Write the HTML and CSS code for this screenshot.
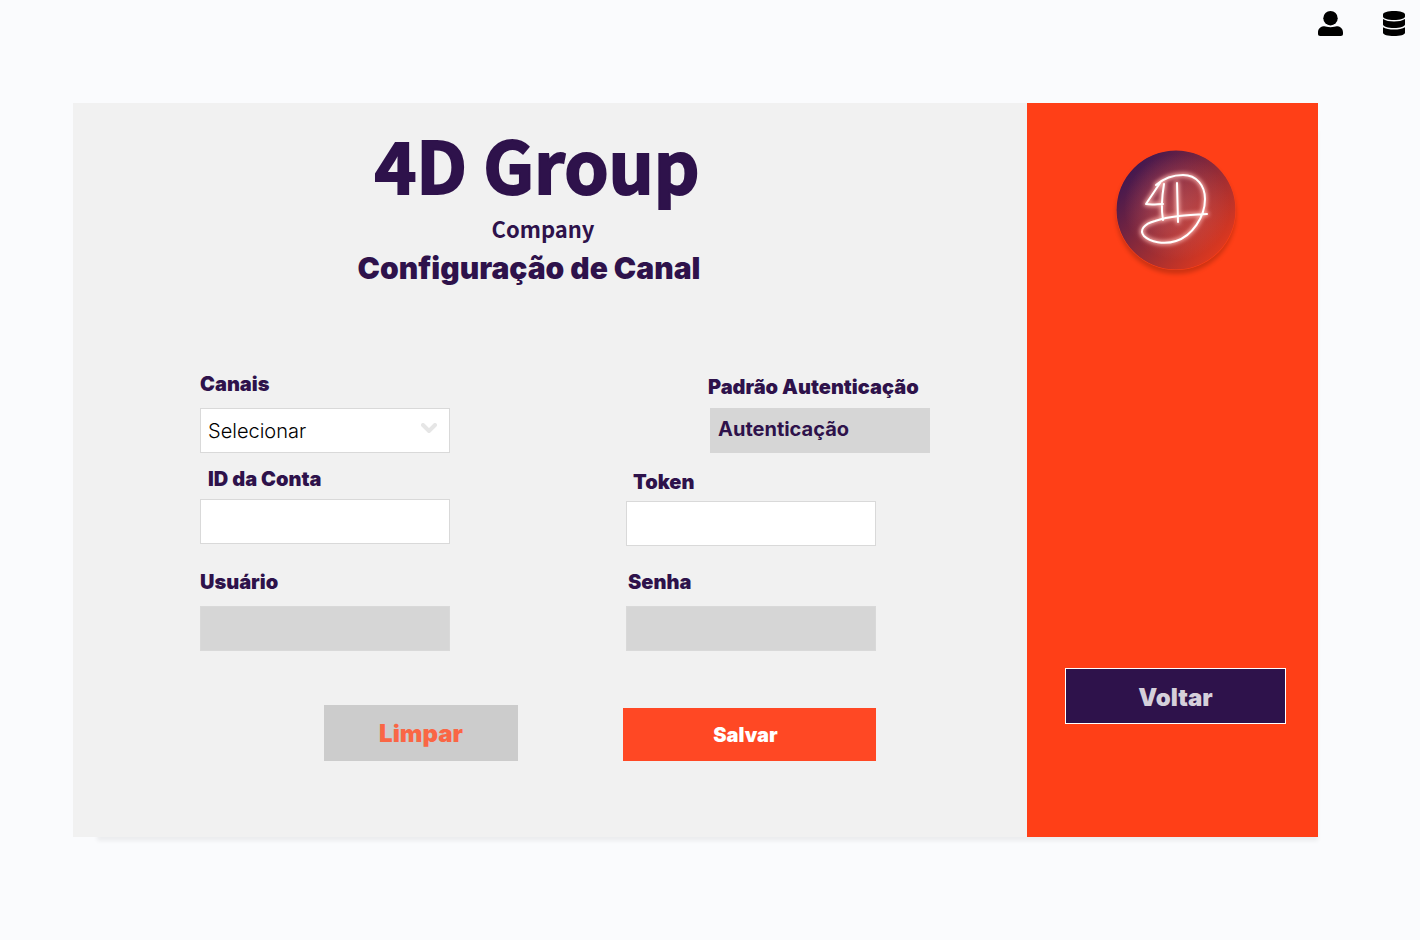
FILE: index.html
```html
<!DOCTYPE html>
<html lang="pt-BR">
<head>
<meta charset="utf-8">
<title>Configuração de Canal</title>
<link rel="stylesheet" href="styles.css">
</head>
<body>
<nav class="topbar">
  <button class="icon-button" type="button" aria-label="Perfil">
    <svg class="icon" viewBox="0 0 26 26"><circle cx="13.500" cy="7.200" r="7.200"/><path d="M6.500 15.300C8.500 14.900 9.800 16.200 13.500 16.200S18.500 14.900 20.500 15.300C24.300 15.800 26 18.500 26 21.500V22.800C26 24.200 25.200 25 23.800 25H3.200C1.800 25 1 24.200 1 22.800V21.500C1 18.500 2.700 15.800 6.500 15.300Z"/></svg>
  </button>
  <button class="icon-button" type="button" aria-label="Banco de dados">
    <svg class="icon" viewBox="0 0 26 26"><path d="M2 3.500C2 1.500 7 0 13 0S24 1.500 24 3.500V5.500C24 7.500 19 9 13 9S2 7.500 2 5.500ZM2 8C4.400 9.700 8.700 10.500 13 10.500S21.600 9.700 24 8V13.500C24 15.400 19 17 13 17S2 15.400 2 13.500ZM2 16.200C4.400 17.900 8.700 18.500 13 18.500S21.600 17.900 24 16.200V21.700C24 23.700 19 25 13 25S2 23.700 2 21.700Z"/></svg>
  </button>
</nav>
<main class="card">
  <section class="panel">
    <header class="heading">
      <h1 class="brand">4D Group</h1>
      <p class="tagline">Company</p>
      <h2 class="title">Configuração de Canal</h2>
    </header>
    <form class="form">
      <div class="fields">
        <div class="field">
          <label class="label" for="canais">Canais</label>
          <div class="select-wrap">
            <select class="control select" id="canais"><option>Selecionar</option></select>
            <svg class="chevron" viewBox="0 0 16 10"><path d="M2 2L8 8L14 2"/></svg>
          </div>
        </div>
        <div class="field field-end">
          <label class="label label-low" for="auth">Padrão Autenticação</label>
          <input class="control control-off control-auth" id="auth" value="Autenticação" readonly>
        </div>
        <div class="field">
          <label class="label label-inset" for="conta">ID da Conta</label>
          <input class="control" id="conta" type="text">
        </div>
        <div class="field">
          <label class="label label-low label-inset-low" for="token">Token</label>
          <input class="control" id="token" type="text">
        </div>
        <div class="field field-last">
          <label class="label" for="usuario">Usuário</label>
          <input class="control control-off" id="usuario" type="text" disabled>
        </div>
        <div class="field field-last">
          <label class="label label-nudge" for="senha">Senha</label>
          <input class="control control-off" id="senha" type="password" disabled>
        </div>
      </div>
      <div class="actions">
        <button class="button button-clear" type="reset">Limpar</button>
        <button class="button button-save" type="button">Salvar</button>
      </div>
    </form>
  </section>
  <aside class="side">
    <svg class="logo" viewBox="0 0 120 120" role="img" aria-label="4D">
      <defs>
        <linearGradient id="disc" x1=".12" y1=".18" x2=".85" y2=".85">
          <stop offset="0" stop-color="#44184f"/><stop offset=".5" stop-color="#8f2b38"/><stop offset="1" stop-color="#dc381f"/>
        </linearGradient>
        <radialGradient id="halo"><stop offset="0" stop-color="#f08078" stop-opacity=".35"/><stop offset=".5" stop-color="#f07068" stop-opacity=".25"/><stop offset="1" stop-color="#f07068" stop-opacity="0"/></radialGradient>
        <filter id="glow" x="-30%" y="-30%" width="160%" height="160%"><feGaussianBlur stdDeviation="2"/></filter>
        <g id="mark">
          <path d="M40 35C47 29 57 25 67 25C81 25 89 36 89 49C89 67 76 86 60 91C48 95 34 92 28 86C23 80 28 74 39 71C53 66 72 65 91 64"/>
          <path d="M44 33L30 54C36 55 42 54 47 54M48 34C46 46 45 59 47 70M61 33L62 72"/>
        </g>
      </defs>
      <circle cx="60" cy="60" r="59.500" fill="url(#disc)"/>
      <circle cx="61" cy="57" r="53" fill="url(#halo)"/>
      <use class="mark-glow" href="#mark" filter="url(#glow)"/>
      <use class="mark-line" href="#mark"/>
    </svg>
    <button class="button button-back" type="button">Voltar</button>
  </aside>
</main>
</body>
</html>
```
FILE: styles.css
```css
* {
  box-sizing: border-box;
}

body {
  margin: 0;
  background: #fafbfd;
  color: #2e124b;
  font-family: Inter, "Liberation Sans", sans-serif;
}

h1, h2, p {
  margin: 0;
}

.topbar {
  display: flex;
  justify-content: flex-end;
  gap: 38px;
  padding: 11px 13px 0;
}

.icon-button {
  display: flex;
  padding: 0;
  border: 0;
  background: none;
}

.icon {
  width: 26px;
  height: 26px;
}

.card {
  position: relative;
  display: flex;
  margin: 66px 102px 40px 73px;
}

/* The shadow starts a little way in from the card's left edge. */
.card::before {
  content: "";
  position: absolute;
  z-index: -1;
  inset: 24px 0 0 24px;
  box-shadow: 0 4px 4px rgba(0, 0, 0, 0.06);
}

.panel {
  flex: 1;
  padding: 25px 97px 76px 127px;
  background: #f1f1f1;
}

.heading {
  padding-right: 56px;
  text-align: center;
}

.brand, .tagline {
  font-family: "Noto Sans CJK JP", "Noto Sans", sans-serif;
  font-weight: 700;
}

.brand {
  padding-bottom: 14px;
  font-size: 71px;
  line-height: 70px;
  -webkit-text-stroke: 2px #2e124b;
}

.tagline {
  padding-left: 12px;
  font-size: 22px;
  line-height: 32px;
}

.title {
  padding-right: 16px;
  font-size: 30px;
  font-weight: 900;
  line-height: 48px;
}

.fields {
  display: grid;
  grid-template-columns: 1fr 304px;
  row-gap: 14px;
  padding-top: 80px;
}

.field {
  display: flex;
  flex-direction: column;
  width: 250px;
}

.field-end {
  justify-self: end;
  width: 222px;
}

.field-last {
  padding-top: 10px;
}

.label {
  padding-bottom: 12px;
  font-size: 20px;
  font-weight: 900;
  line-height: 24px;
  white-space: nowrap;
}

.label-inset {
  padding-bottom: 8px;
  padding-left: 8px;
}

.label-low {
  padding-top: 3px;
  padding-bottom: 9px;
}

.label-inset-low {
  padding-bottom: 7px;
  padding-left: 7px;
}

.label-nudge {
  padding-left: 2px;
}

.control {
  width: 100%;
  height: 45px;
  padding: 0 7px;
  border: 1px solid #d9d9d9;
  border-radius: 0;
  background: #fff;
  color: #000;
  font: 300 20px Inter, sans-serif;
}

.control-off {
  background: #d6d6d6;
}

.control-auth {
  align-self: flex-end;
  width: 220px;
  padding-bottom: 3px;
  border-color: #d6d6d6;
  color: #2e124b;
  font-weight: 700;
}

.select-wrap {
  position: relative;
}

.select {
  display: block;
  appearance: none;
}

.chevron {
  position: absolute;
  top: 15px;
  right: 13px;
  width: 16px;
  height: 10px;
  fill: none;
  stroke: #e6e6e6;
  stroke-width: 4;
  stroke-linecap: round;
  pointer-events: none;
}

.actions {
  display: flex;
  align-items: flex-end;
  gap: 105px;
  padding: 54px 54px 0 124px;
}

.button {
  padding: 0;
  border: 0;
  font-family: Inter, sans-serif;
  font-weight: 900;
}

.button-clear {
  flex: 194;
  height: 56px;
  background: #ccc;
  color: #fa6645;
  font-size: 24px;
}

.button-save {
  flex: 253;
  height: 53px;
  background: #ff4824;
  color: #fff;
  font-size: 20px;
  text-indent: -8px;
}

.side {
  display: flex;
  flex-direction: column;
  align-items: center;
  justify-content: space-between;
  width: 291px;
  padding: 47px 32px 113px 38px;
  background: #ff3f17;
}

.logo {
  width: 120px;
  height: 120px;
  border-radius: 50%;
  box-shadow: 0 4px 4px rgba(0, 0, 0, 0.2);
}

.mark-glow, .mark-line {
  fill: none;
  stroke-linecap: round;
  stroke-linejoin: round;
}

.mark-glow {
  stroke: #ffb5b0;
  stroke-width: 4;
}

.mark-line {
  stroke: #fff;
  stroke-width: 2;
}

.button-back {
  width: 100%;
  height: 56px;
  padding-top: 2px;
  border: 1px solid #fff;
  background: #2e124b;
  color: #d5d0db;
  font-size: 24px;
}
```
